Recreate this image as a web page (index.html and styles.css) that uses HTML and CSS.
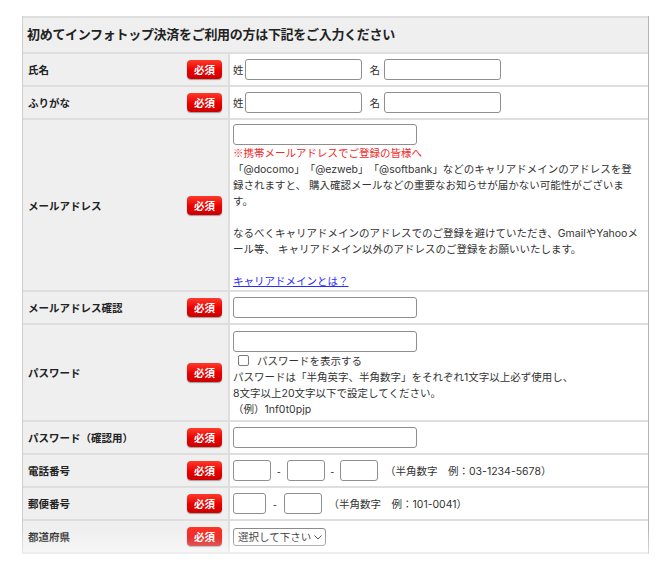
FILE: index.html
```html
<!DOCTYPE html>
<html lang="ja">
<head>
<meta charset="utf-8">
<title>購入者情報入力</title>
<link rel="stylesheet" href="styles.css">
</head>
<body>
<div class="page">
  <div class="form-wrap">
    <table class="form">
      <colgroup><col class="c1"><col class="c2"></colgroup>
      <tr><th colspan="2" class="head">初めてインフォトップ決済をご利用の方は下記をご入力ください</th></tr>
      <tr>
        <th class="lbl"><div class="lbl-in"><span>氏名</span><span class="req">必須</span></div></th>
        <td class="val"><div class="inline"><span>姓</span><input class="txt w117 ml1" type="text"><span class="mei">名</span><input class="txt w117" type="text"></div></td>
      </tr>
      <tr>
        <th class="lbl"><div class="lbl-in"><span>ふりがな</span><span class="req">必須</span></div></th>
        <td class="val"><div class="inline"><span>姓</span><input class="txt w117 ml1" type="text"><span class="mei">名</span><input class="txt w117" type="text"></div></td>
      </tr>
      <tr>
        <th class="lbl"><div class="lbl-in"><span>メールアドレス</span><span class="req">必須</span></div></th>
        <td class="val email">
          <input class="txt w184 blk" type="text">
          <div class="note"><span class="red">※携帯メールアドレスでご登録の皆様へ</span><br>「<span class="lat">@docomo</span>」「<span class="lat">@ezweb</span>」「<span class="lat">@softbank</span>」などのキャリアドメインのアドレスを登<br>録されますと、 購入確認メールなどの重要なお知らせが届かない可能性がございま<br>す。<br><br>なるべくキャリアドメインのアドレスでのご登録を避けていただき、<span class="lat">Gmail</span>や<span class="lat">Yahoo</span>メ<br>ール等、 キャリアドメイン以外のアドレスのご登録をお願いいたします。<br><br><a class="link" href="#">キャリアドメインとは？</a></div>
        </td>
      </tr>
      <tr>
        <th class="lbl"><div class="lbl-in"><span>メールアドレス確認</span><span class="req">必須</span></div></th>
        <td class="val"><div class="inline"><input class="txt w184" type="text"></div></td>
      </tr>
      <tr>
        <th class="lbl"><div class="lbl-in"><span>パスワード</span><span class="req">必須</span></div></th>
        <td class="val pw">
          <input class="txt w184 blk" type="password">
          <label class="chk-line"><input class="chk" type="checkbox"><span>パスワードを表示する</span></label>
          <div class="note">パスワードは「半角英字、半角数字」をそれぞれ<span class="lat">1</span>文字以上必ず使用し、<br><span class="lat">8</span>文字以上<span class="lat">20</span>文字以下で設定してください。<br>（例）<span class="lat">1nf0t0pjp</span></div>
        </td>
      </tr>
      <tr>
        <th class="lbl"><div class="lbl-in"><span>パスワード（確認用）</span><span class="req">必須</span></div></th>
        <td class="val"><div class="inline"><input class="txt w184" type="password"></div></td>
      </tr>
      <tr>
        <th class="lbl"><div class="lbl-in"><span>電話番号</span><span class="req">必須</span></div></th>
        <td class="val"><div class="inline"><input class="txt w38" type="text"><span class="dash">-</span><input class="txt w38" type="text"><span class="dash">-</span><input class="txt w38" type="text"><span class="hint">（半角数字　例：<span class="lat">03-1234-5678</span>）</span></div></td>
      </tr>
      <tr>
        <th class="lbl"><div class="lbl-in"><span>郵便番号</span><span class="req">必須</span></div></th>
        <td class="val"><div class="inline"><input class="txt w33" type="text"><span class="dash dash-w">-</span><input class="txt w38" type="text"><span class="hint">（半角数字　例：<span class="lat">101-0041</span>）</span></div></td>
      </tr>
      <tr>
        <th class="lbl"><div class="lbl-in"><span>都道府県</span><span class="req">必須</span></div></th>
        <td class="val"><div class="inline"><span class="sel-wrap"><select class="sel"><option>選択して下さい</option><option>北海道</option><option>東京都</option></select><svg class="chev" viewBox="0 0 8 5" width="8" height="5"><path d="M0.5 0.5 L4 4 L7.5 0.5" fill="none" stroke="#333" stroke-width="1"/></svg></span></div></td>
      </tr>
    </table>
  </div>
</div>
</body>
</html>
```

FILE: styles.css
```css
* { box-sizing: border-box; }

body {
  margin: 0;
  background: #fff;
  font-family: "Liberation Sans", "Noto Sans CJK JP", sans-serif;
  color: #333;
  text-spacing-trim: space-all;
}

.lat {
  font-family: "Inter", "Liberation Sans", sans-serif;
  line-height: 1;
}

.page {
  padding: 16px 0 0 22px;
}

.form-wrap {
  position: relative;
  width: 627px;
}

.form-wrap::after {
  content: "";
  position: absolute;
  left: -6px;
  right: -6px;
  bottom: 0;
  height: 26px;
  background: linear-gradient(rgba(255,255,255,0), rgba(255,255,255,0.5));
  pointer-events: none;
}

.form {
  width: 627px;
  border-collapse: separate;
  border-spacing: 0;
  table-layout: fixed;
  border-left: 1px solid #cfcfcf;
  border-right: 1px solid #b4b4b4;
}

.c1 { width: 207px; }

.head {
  background: #efefef;
  border-top: 2px solid #dedede;
  border-bottom: 2px solid #dedede;
  padding: 0 4px;
  line-height: 34px;
  height: 38px;
  text-align: left;
  font-size: 13px;
  letter-spacing: -0.3px;
  font-weight: bold;
  color: #222;
}

.lbl {
  background: #efefef;
  border-bottom: 2px solid #dedede;
  border-right: 2px solid #dedede;
  padding: 0 6px 0 5px;
  vertical-align: middle;
  text-align: left;
  font-weight: bold;
  font-size: 10.5px;
  color: #222;
}

.lbl-in {
  display: flex;
  justify-content: space-between;
  align-items: center;
}

.req {
  width: 35px;
  height: 19px;
  border-radius: 4px;
  background: linear-gradient(#ff3a2a, #e80000 55%, #cc0000);
  color: #fff;
  font-size: 10.5px;
  font-weight: bold;
  display: flex;
  align-items: center;
  justify-content: center;
  box-shadow: 0 1px 1px rgba(0,0,0,0.35);
}

.val {
  background: #fff;
  border-bottom: 2px solid #dedede;
  padding: 5px 3px;
  font-size: 10.5px;
  vertical-align: middle;
  color: #333;
}

.inline {
  display: flex;
  align-items: center;
  height: 21px;
  white-space: nowrap;
}

.txt {
  height: 21px;
  border: 1px solid #8f8f8f;
  border-radius: 3px;
  padding: 0 3px;
  margin: 0;
  background: #fff;
  font: inherit;
  outline: none;
}

.blk { display: block; }
.ml1 { margin-left: 1px; }
.w117 { width: 117px; }
.w184 { width: 184px; }
.w38 { width: 38px; }
.w33 { width: 33px; }

.mei {
  margin: 0 4px 0 8px;
}

.dash {
  margin: 0 6px;
}

.dash-w {
  margin: 0 7px 0 7px;
}

.hint {
  margin-left: 7px;
}

.email {
  padding: 4px 3px 1px;
}

.note {
  line-height: 16px;
  white-space: nowrap;
}

.red { color: #f02a2a; }

.link { color: #2b2bff; }

.pw {
  padding: 6px 3px 3px;
}

.chk-line {
  display: flex;
  align-items: center;
  height: 17px;
}

.chk {
  appearance: none;
  -webkit-appearance: none;
  width: 11px;
  height: 11px;
  border: 1px solid #7a7a7a;
  border-radius: 2px;
  margin: 0 8px 0 5px;
  background: #fff;
}

.sel-wrap {
  position: relative;
  display: inline-block;
  height: 18px;
}

.sel {
  appearance: none;
  -webkit-appearance: none;
  height: 18px;
  width: 93px;
  border: 1px solid #8a8a8a;
  border-radius: 3px;
  padding: 0 0 0 4px;
  margin: 0;
  background: #fff;
  color: #222;
  font-family: inherit;
  font-size: 10.5px;
}

.chev {
  position: absolute;
  right: 4px;
  top: 7px;
  pointer-events: none;
}
```
